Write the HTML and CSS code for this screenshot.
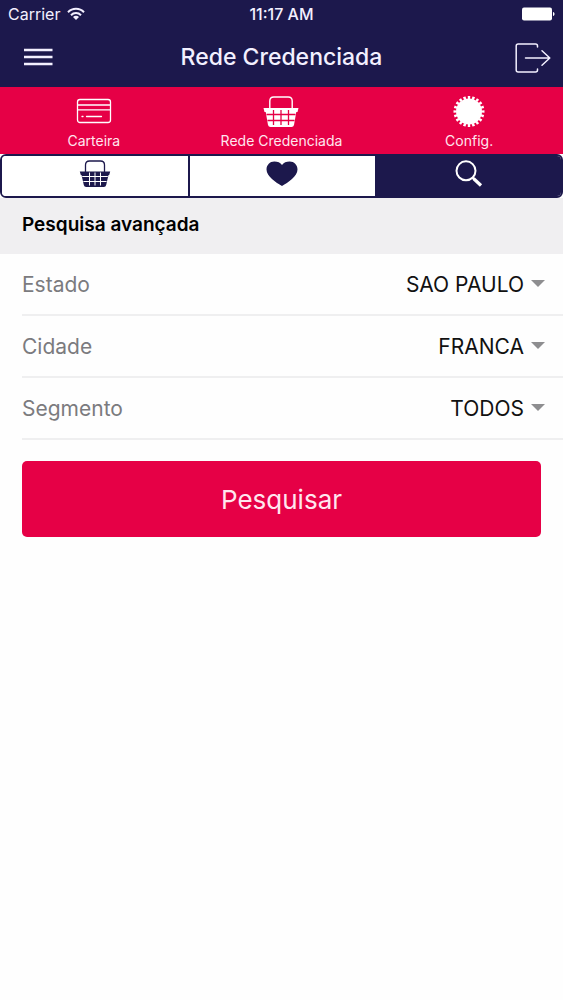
FILE: index.html
```html
<!DOCTYPE html>
<html lang="pt-BR">
<head>
    <meta charset="UTF-8">
    <meta name="viewport" content="width=device-width, initial-scale=1.0">
    <title>Rede Credenciada</title>
    <link rel="stylesheet" href="styles.css">
</head>
<body>
    <header class="header">
        <div class="status">
            <div class="carrier">
                <span>Carrier</span>
                <svg width="18" height="14" viewBox="0 0 18 14" fill="none" stroke="currentColor" stroke-width="2">
                    <path d="M1 5.2C5.4 0.6 12.6 0.6 17 5.2"/>
                    <path d="M4 8.2c2.8-2.9 7.2-2.9 10 0"/>
                    <path d="M9 13L6 10c1.6-1.6 4.4-1.6 6 0z" fill="currentColor" stroke="none"/>
                </svg>
            </div>
            <span class="time">11:17 AM</span>
            <svg class="battery" width="34" height="14" viewBox="0 0 34 14" fill="currentColor">
                <rect x="1" y="0.5" width="30" height="13" rx="2"/>
                <path d="M32 5c2 0.6 2 3.4 0 4z"/>
            </svg>
        </div>
        <div class="navbar">
            <button class="icon-btn" type="button" aria-label="Menu">
                <svg width="30" height="20" viewBox="0 0 30 20" stroke="currentColor" stroke-width="2.4">
                    <path d="M1 2h28.5M1 9h28.5M1 16h28.5"/>
                </svg>
            </button>
            <h1 class="title">Rede Credenciada</h1>
            <button class="icon-btn icon-btn-right" type="button" aria-label="Sair">
                <svg width="36" height="30" viewBox="0 0 36 30" fill="none" stroke="currentColor" stroke-width="1.5" stroke-linecap="round" stroke-linejoin="round">
                    <path d="M22.5 4V3q0-2-2-2H3.2q-2 0-2 2v24q0 2 2 2h17.3q2 0 2-2v-1"/>
                    <path d="M10.5 15h24M27 7.8l7.8 7.2-7.8 7.2"/>
                </svg>
            </button>
        </div>
    </header>

    <nav class="tabs">
        <a class="tab" href="#carteira">
            <svg width="36" height="32" viewBox="0 0 36 32" fill="none" stroke="currentColor" stroke-width="1.3" stroke-linecap="round">
                <rect x="1.5" y="3.5" width="33" height="23" rx="2.5"/>
                <path d="M2 9h32M2 13.8h32M6 20.5h1M10.5 20.5h15"/>
            </svg>
            <span>Carteira</span>
        </a>
        <a class="tab" href="#rede">
            <svg width="36" height="32" viewBox="0 0 36 32">
                <path d="M6.8 13V5q0-4 4-4h14.4q4 0 4 4v8" fill="none" stroke="currentColor" stroke-width="1.4"/>
                <path d="M0.5 12h35l-1 4h-1.2l-2.3 13q-0.5 2-2.5 2H7.500q-2 0-2.500-2L2.700 16H1.500z" fill="currentColor"/>
                <path d="M3.5 18.500h29M4.500 24.500h27M10.500 14v15M18 14v15M25.500 14v15" stroke="#e60046" stroke-width="1.300"/>
            </svg>
            <span>Rede Credenciada</span>
        </a>
        <a class="tab" href="#config">
            <svg width="36" height="32" viewBox="0 0 36 32">
                <circle cx="18" cy="15.5" r="13" fill="currentColor"/>
                <circle cx="18" cy="15.5" r="14" fill="none" stroke="currentColor" stroke-width="3" pathLength="40" stroke-dasharray="1.1 0.9" stroke-dashoffset="0.55"/>
            </svg>
            <span>Config.</span>
        </a>
    </nav>

    <div class="segments">
        <button class="segment" type="button" aria-label="Rede">
            <svg width="32" height="28" viewBox="0 0 32 28">
                <path d="M6.5 12V5q0-4 4-4h11q4 0 4 4v7" fill="none" stroke="currentColor" stroke-width="1.3"/>
                <path d="M0.8 11.5h30.4l-1 3.500h-0.700l-2.300 10q-0.500 2-2.300 2H7.100q-1.800 0-2.300-2L2.500 15h-0.700z" fill="currentColor"/>
                <path d="M3.2 16.500h25.600M4.400 21.500h23.200M10.500 12.500v13M16 12.500v13M21.500 12.500v13" stroke="#fff" stroke-width="1"/>
            </svg>
        </button>
        <button class="segment" type="button" aria-label="Favoritos">
            <svg width="32" height="28" viewBox="0 0 32 28">
                <path d="M16 26C10 22.5 0.5 16.5 0.5 9.5 0.5 5 4 1.500 8.300 1.500c3.300 0 6.200 1.100 7.700 3.500 1.500-2.400 4.400-3.500 7.700-3.500 4.300 0 7.800 3.500 7.800 8C31.500 16.500 22 22.500 16 26z" fill="currentColor"/>
            </svg>
        </button>
        <button class="segment active" type="button" aria-label="Pesquisar">
            <svg width="32" height="28" viewBox="0 0 32 28" fill="none" stroke="currentColor">
                <circle cx="13" cy="10.8" r="9.5" stroke-width="2"/>
                <path d="M19.5 17.5l2 2" stroke-width="2"/>
                <path d="M20.5 18.5l7.5 7" stroke-width="3.2"/>
            </svg>
        </button>
    </div>

    <main>
        <h2 class="section-title">Pesquisa avançada</h2>
        <form class="form" action="#">
            <div class="row">
                <label for="estado">Estado</label>
                <select id="estado" name="estado">
                    <option>SAO PAULO</option>
                </select>
            </div>
            <div class="row">
                <label for="cidade">Cidade</label>
                <select id="cidade" name="cidade">
                    <option>FRANCA</option>
                </select>
            </div>
            <div class="row">
                <label for="segmento">Segmento</label>
                <select id="segmento" name="segmento">
                    <option>TODOS</option>
                </select>
            </div>
            <button class="btn" type="submit">Pesquisar</button>
        </form>
    </main>
</body>
</html>
```

FILE: styles.css
```css
* {
    box-sizing: border-box;
}

body {
    margin: 0;
    font-family: Inter, "Liberation Sans", sans-serif;
    background-color: #fefefe;
    color: #111;
}

button {
    font-family: inherit;
    cursor: pointer;
}

svg {
    display: block;
}

.header {
    background-color: #1c184c;
    color: #f3f0ff;
}

/* Status bar */
.status {
    display: grid;
    grid-template-columns: 1fr auto 1fr;
    align-items: center;
    height: 28px;
    padding: 0 8px;
    font-size: 16px;
}

.carrier {
    display: flex;
    align-items: center;
    gap: 7px;
}

.time {
    font-weight: 500;
}

.battery {
    justify-self: end;
    color: #fff;
}

.navbar {
    display: grid;
    grid-template-columns: 1fr auto 1fr;
    align-items: center;
    height: 59px;
    padding: 0 12px;
}

.icon-btn {
    justify-self: start;
    padding: 0 0 0 11px;
    border: none;
    background: none;
    color: inherit;
}

.icon-btn-right {
    justify-self: end;
    padding: 0;
}

.title {
    margin: 0;
    padding-bottom: 2px;
    font-size: 23px;
    line-height: 28px;
    font-weight: 500;
}

/* Tabs */
.tabs {
    display: grid;
    grid-template-columns: repeat(3, 1fr);
    height: 67px;
    background-color: #e60046;
}

.tab {
    display: flex;
    flex-direction: column;
    align-items: center;
    gap: 3px;
    padding-top: 9px;
    color: #fff;
    font-size: 14px;
    line-height: 20px;
    text-decoration: none;
}

.tab span {
    color: #ffe6ee;
}

.segments {
    display: grid;
    grid-template-columns: repeat(3, 1fr);
    height: 44px;
    border: 2px solid #1c184c;
    border-radius: 6px;
    background-color: #fff;
    overflow: hidden;
}

.segment {
    display: flex;
    justify-content: center;
    padding: 4px 0 0;
    border: none;
    background-color: #fff;
    color: #1c184c;
}

.segment + .segment {
    border-left: 2px solid #1c184c;
}

.segment.active {
    background-color: #1c184c;
    color: #fff;
}

/* Search form */
.section-title {
    margin: 0;
    padding: 15px 22px 17px;
    background-color: #f0eff1;
    color: #000;
    font-size: 19px;
    line-height: 24px;
    font-weight: 600;
}

.form {
    padding-left: 22px;
}

.row {
    display: flex;
    align-items: center;
    justify-content: space-between;
    height: 62px;
    padding-right: 18px;
    border-bottom: 2px solid #efeff0;
}

.row label {
    color: #7b7b7e;
    font-size: 21px;
}

.row select {
    appearance: none;
    padding: 0 21px 0 0;
    border: none;
    background: url("data:image/svg+xml,%3Csvg xmlns='http://www.w3.org/2000/svg' width='14' height='7'%3E%3Cpath d='M0 0h14L7 7z' fill='%238e8e90'/%3E%3C/svg%3E") no-repeat right 8px;
    color: #111;
    font-family: inherit;
    font-size: 21px;
    text-align-last: right;
}

.btn {
    display: block;
    width: calc(100% - 22px);
    height: 76px;
    margin-top: 21px;
    border: none;
    border-radius: 5px;
    background-color: #e60046;
    color: #ffe6ee;
    font-size: 26px;
}
```
